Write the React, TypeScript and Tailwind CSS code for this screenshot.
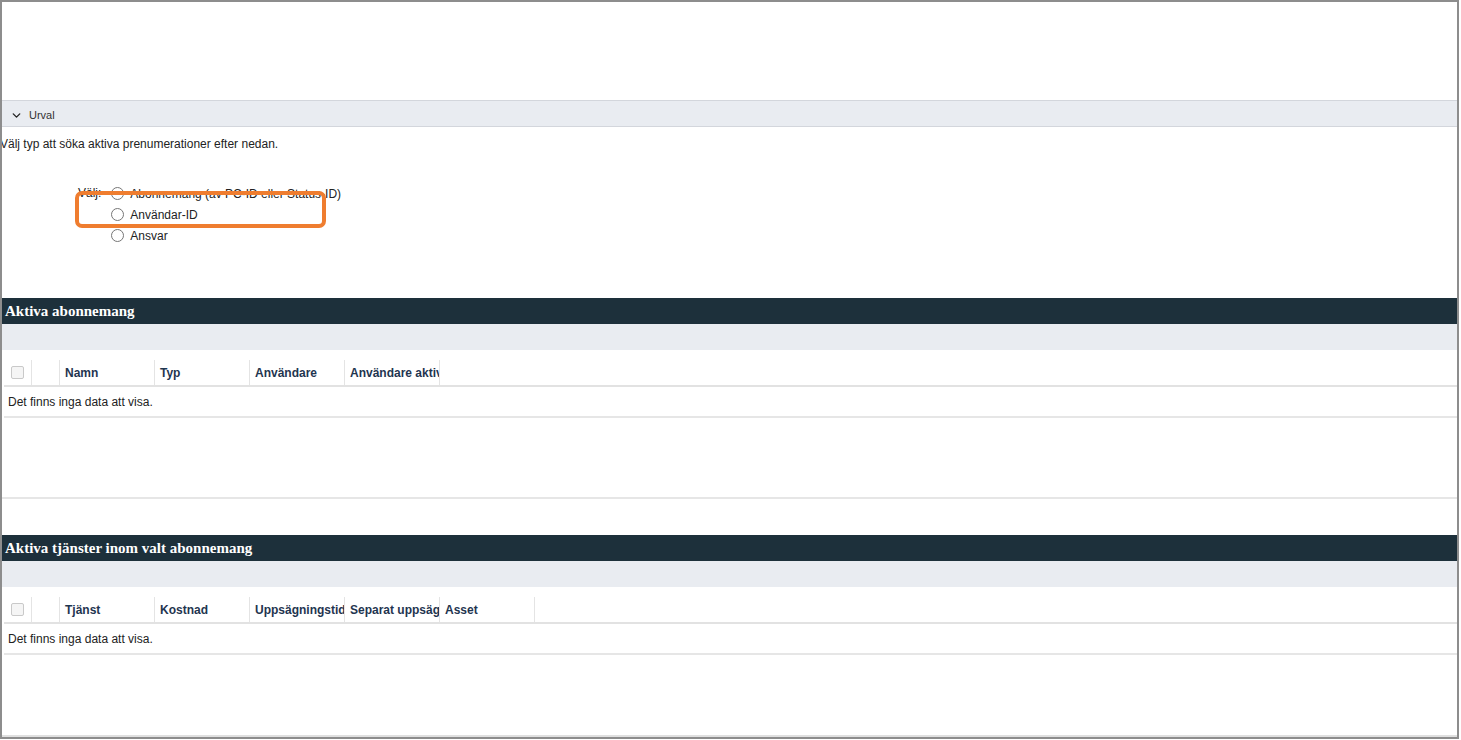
import { ChevronDown } from "lucide-react";

const sans = "font-['Liberation_Sans',Arial,sans-serif]";

function Radio({ label }: { label: string }) {
  return (
    <label className="flex items-center h-[21px] gap-[6px]">
      <span className="w-[13px] h-[13px] rounded-full border border-[#767676] bg-white" />
      <span className="text-[12px] text-[#222]">{label}</span>
    </label>
  );
}

function SectionHeader({ title }: { title: string }) {
  return (
    <>
      <div className="h-[26px] bg-[#1d303b] flex items-center pl-[3px]">
        <h2 className="font-['Liberation_Serif','Times_New_Roman',serif] font-bold text-[15px] text-white">
          {title}
        </h2>
      </div>
      <div className="h-[26px] bg-[#e9ecf1]" />
    </>
  );
}

function Grid({ columns }: { columns: string[] }) {
  return (
    <div className="mt-[10px] ml-[2px]">
      <div className="flex h-[27px] border-b-2 border-[#e2e2e2]">
        <div className="w-[28px] border-r border-[#e4e4e4] flex items-center justify-center">
          <span className="w-[13px] h-[13px] rounded-[2px] border border-[#c9c9c9] bg-[#f5f5f5]" />
        </div>
        <div className="w-[28px] border-r border-[#e4e4e4]" />
        {columns.map((c) => (
          <div
            key={c}
            className="w-[95px] border-r border-[#e4e4e4] flex items-center pl-[5px] overflow-hidden whitespace-nowrap text-[12px] font-bold text-[#1f3550]"
          >
            {c}
          </div>
        ))}
      </div>
      <div className="h-[31px] border-b-2 border-[#e6e6e6] flex items-center pl-[4px] text-[12px] text-[#222]">
        Det finns inga data att visa.
      </div>
    </div>
  );
}

export default function App() {
  return (
    <div className={`w-[1461px] h-[740px] bg-white ${sans}`}>
      <div className="w-[1459px] h-[739px] border-2 border-[#8d8d8d] flex flex-col overflow-hidden">
        <div className="h-[98px]" />
        <div className="h-[27px] bg-[#e9ecf1] border-y border-[#d3d6dc] flex items-center pt-[3px] pl-[8px] gap-[6px]">
          <ChevronDown className="w-[13px] h-[13px] text-[#222]" strokeWidth={2.5} />
          <span className="text-[11px] text-[#333]">Urval</span>
        </div>
        <p className="mt-[10px] ml-[-2px] text-[12px] leading-[15px] text-[#222]">
          Välj typ att söka aktiva prenumerationer efter nedan.
        </p>
        <div className="relative mt-[31px] ml-[76px] flex gap-[10px]">
          <span className="text-[12px] text-[#222] leading-[21px]">Välj:</span>
          <div className="flex flex-col">
            <Radio label="Abonnemang (av PC-ID eller Status-ID)" />
            <Radio label="Användar-ID" />
            <Radio label="Ansvar" />
          </div>
          <div className="absolute left-[-3px] top-[8px] w-[251px] h-[37px] border-[4px] border-[#ef7d2f] rounded-[7px]" />
        </div>
        <div className="h-[52px]" />
        <SectionHeader title="Aktiva abonnemang" />
        <Grid columns={["Namn", "Typ", "Användare", "Användare aktiv"]} />
        <div className="h-[81px] border-b-2 border-[#e6e6e6]" />
        <div className="h-[36px]" />
        <SectionHeader title="Aktiva tjänster inom valt abonnemang" />
        <Grid
          columns={["Tjänst", "Kostnad", "Uppsägningstid", "Separat uppsägning", "Asset"]}
        />
        <div className="flex-1" />
        <div className="h-[2px] bg-[#e0e0e0]" />
      </div>
    </div>
  );
}
